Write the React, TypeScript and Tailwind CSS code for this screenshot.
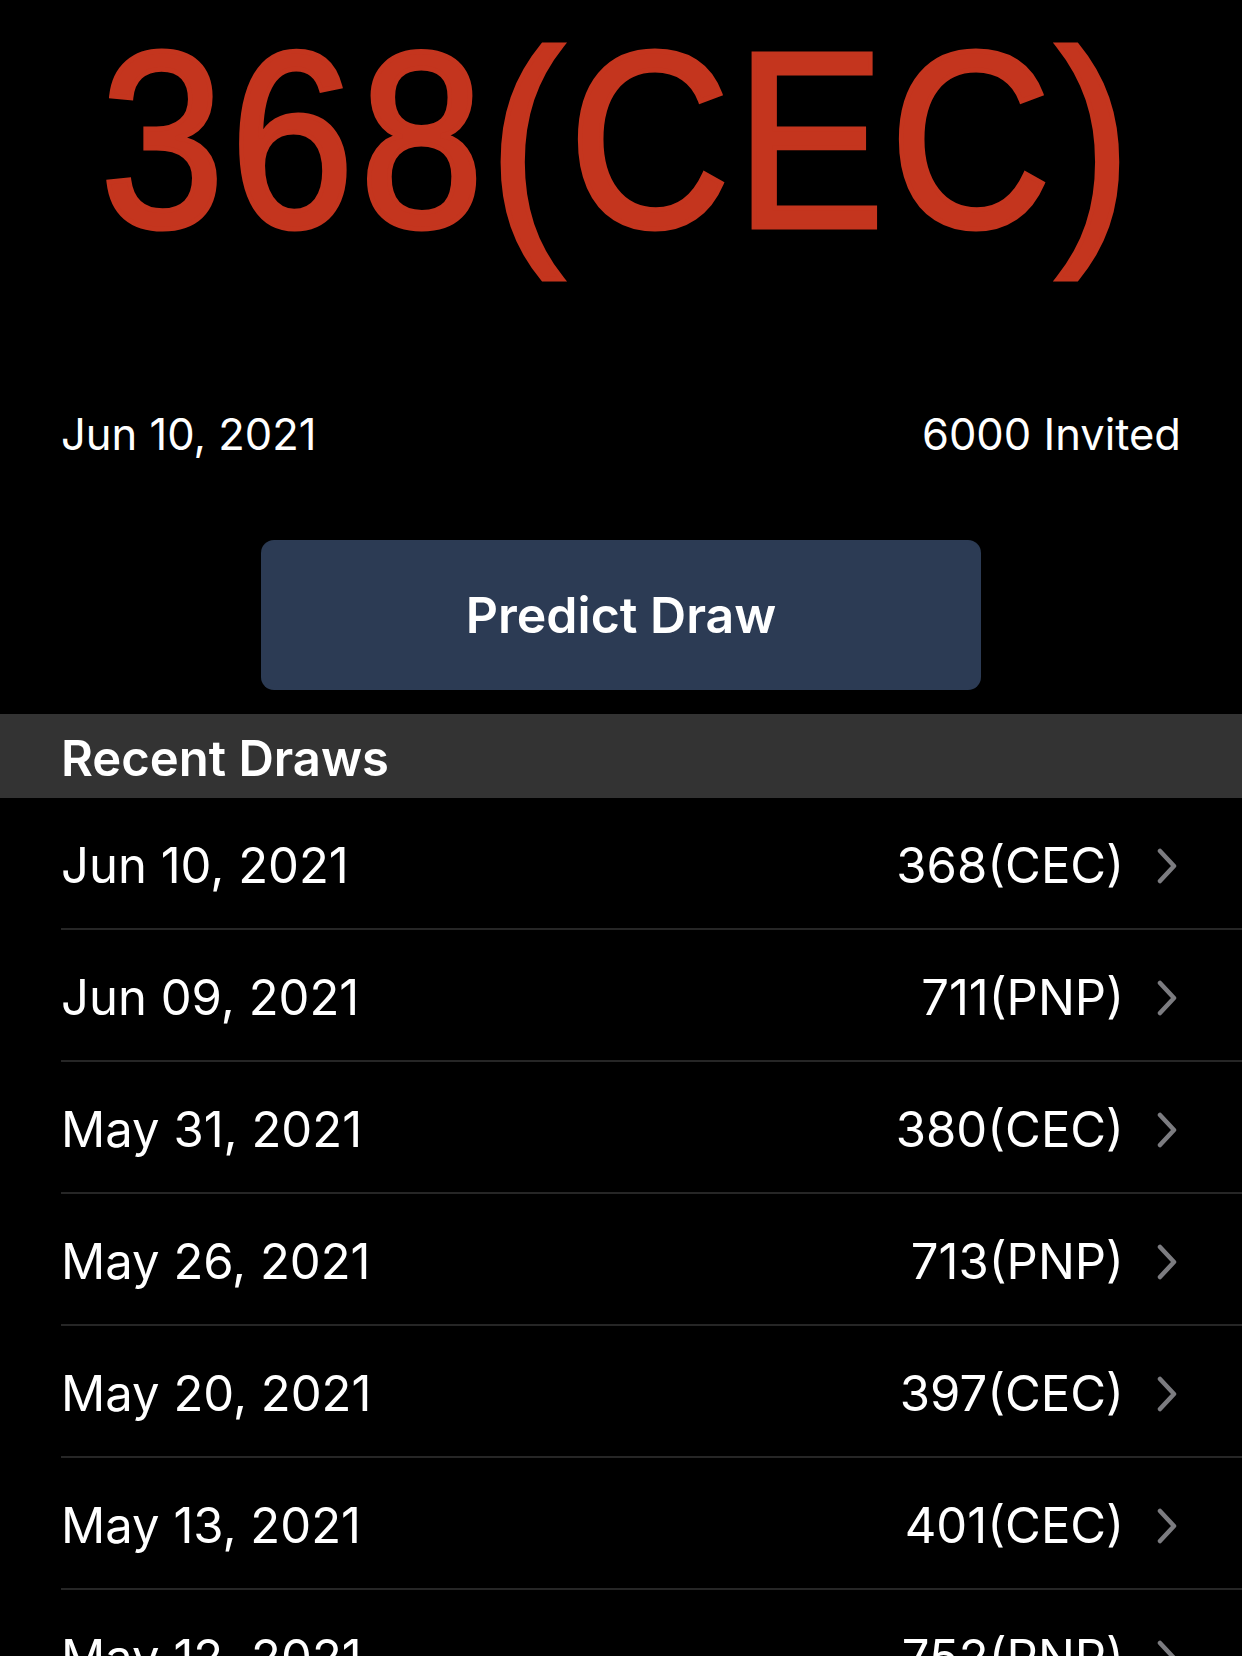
import React from 'react';

const draws = [
  { date: 'Jun 10, 2021', score: '368(CEC)' },
  { date: 'Jun 09, 2021', score: '711(PNP)' },
  { date: 'May 31, 2021', score: '380(CEC)' },
  { date: 'May 26, 2021', score: '713(PNP)' },
  { date: 'May 20, 2021', score: '397(CEC)' },
  { date: 'May 13, 2021', score: '401(CEC)' },
  { date: 'May 12, 2021', score: '752(PNP)' },
];

function Chevron() {
  return (
    <svg width="22" height="36" viewBox="0 0 22 36" fill="none" className="shrink-0">
      <polyline
        points="4,3 18,18 4,33"
        stroke="#7c7c80"
        strokeWidth="4.5"
        strokeLinecap="round"
        strokeLinejoin="round"
      />
    </svg>
  );
}

export default function App() {
  return (
    <div className="w-[1242px] h-[1656px] overflow-hidden bg-black text-white font-['Inter','Liberation_Sans',sans-serif]">
      {/* big latest result */}
      <div className="h-[330px] flex justify-center pt-[15px]">
        <div className="scale-x-[0.89] pl-[6px] pr-[12px]">
          <div className="text-[251px] leading-none tracking-[6px] text-[#c4351e] font-['Liberation_Sans',sans-serif] [-webkit-text-stroke:5px_#c4351e]">
            368(CEC)
          </div>
        </div>
      </div>

      <div className="h-[210px] flex items-center justify-between px-[61px] text-[43.5px]">
        <span>Jun 10, 2021</span>
        <span>6000 Invited</span>
      </div>

      <div className="flex justify-center">
        <button className="w-[720px] h-[150px] rounded-[13px] bg-[#2c3b54] text-[50px] font-semibold text-white">
          Predict Draw
        </button>
      </div>

      <div className="mt-[24px] h-[84px] bg-[#333333] flex items-center px-[61px] pt-[5px]">
        <span className="text-[49px] font-semibold">Recent Draws</span>
      </div>

      <div className="pl-[61px]">
        {draws.map((d) => (
          <div
            key={d.date}
            className="h-[132px] flex items-center justify-between border-b-[2px] border-[#262626] pr-[64px] pt-[6px] text-[49px]"
          >
            <span>{d.date}</span>
            <div className="flex items-center gap-[32px]">
              <span>{d.score}</span>
              <Chevron />
            </div>
          </div>
        ))}
      </div>
    </div>
  );
}
